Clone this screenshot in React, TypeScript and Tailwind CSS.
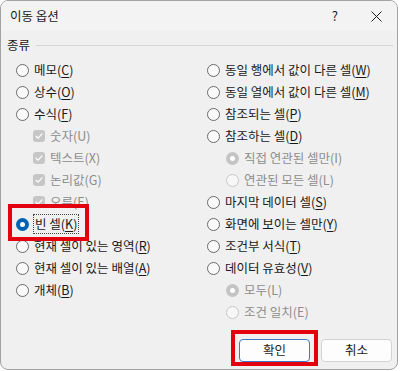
import React from "react"

type Item = {
  label: string
  key: string
  kind: "radio" | "check"
  indent?: boolean
  disabled?: boolean
  checked?: boolean
  focus?: boolean
}

const leftItems: Item[] = [
  { label: "메모", key: "C", kind: "radio" },
  { label: "상수", key: "O", kind: "radio" },
  { label: "수식", key: "F", kind: "radio" },
  { label: "숫자", key: "U", kind: "check", indent: true, disabled: true, checked: true },
  { label: "텍스트", key: "X", kind: "check", indent: true, disabled: true, checked: true },
  { label: "논리값", key: "G", kind: "check", indent: true, disabled: true, checked: true },
  { label: "오류", key: "E", kind: "check", indent: true, disabled: true, checked: true },
  { label: "빈 셀", key: "K", kind: "radio", checked: true, focus: true },
  { label: "현재 셀이 있는 영역", key: "R", kind: "radio" },
  { label: "현재 셀이 있는 배열", key: "A", kind: "radio" },
  { label: "개체", key: "B", kind: "radio" },
]

const rightItems: Item[] = [
  { label: "동일 행에서 값이 다른 셀", key: "W", kind: "radio" },
  { label: "동일 열에서 값이 다른 셀", key: "M", kind: "radio" },
  { label: "참조되는 셀", key: "P", kind: "radio" },
  { label: "참조하는 셀", key: "D", kind: "radio" },
  { label: "직접 연관된 셀만", key: "I", kind: "radio", indent: true, disabled: true, checked: true },
  { label: "연관된 모든 셀", key: "L", kind: "radio", indent: true, disabled: true },
  { label: "마지막 데이터 셀", key: "S", kind: "radio" },
  { label: "화면에 보이는 셀만", key: "Y", kind: "radio" },
  { label: "조건부 서식", key: "T", kind: "radio" },
  { label: "데이터 유효성", key: "V", kind: "radio" },
  { label: "모두", key: "L", kind: "radio", indent: true, disabled: true, checked: true },
  { label: "조건 일치", key: "E", kind: "radio", indent: true, disabled: true },
]

function Radio({ checked, disabled }: { checked?: boolean; disabled?: boolean }) {
  if (checked && !disabled) {
    return (
      <span className="w-[13px] h-[13px] rounded-full bg-[#0063b1] flex items-center justify-center shrink-0">
        <span className="w-[5px] h-[5px] rounded-full bg-white" />
      </span>
    )
  }
  if (checked && disabled) {
    return (
      <span className="w-[13px] h-[13px] rounded-full bg-[#c4c4c4] flex items-center justify-center shrink-0">
        <span className="w-[5px] h-[5px] rounded-full bg-white" />
      </span>
    )
  }
  return (
    <span
      className={
        disabled
          ? "w-[13px] h-[13px] rounded-full border border-[#c8c8c8] bg-[#f7f7f7] shrink-0"
          : "w-[13px] h-[13px] rounded-full border border-[#6b6b6b] bg-[#fafafa] shrink-0"
      }
    />
  )
}

function Check() {
  return (
    <span className="w-[12px] h-[12px] rounded-[3px] bg-[#c6c6c6] flex items-center justify-center shrink-0">
      <svg width="8" height="8" viewBox="0 0 8 8" fill="none">
        <path d="M1 4.2 L3.1 6.2 L7 1.8" stroke="white" strokeWidth="1.2" strokeLinecap="round" strokeLinejoin="round" />
      </svg>
    </span>
  )
}

function Row({ item, sub }: { item: Item; sub: number }) {
  const text = (
    <span className={item.focus ? "outline outline-1 outline-dotted outline-[#444] px-[1px]" : ""}>
      {item.label}(
      {item.disabled ? item.key : <span className="underline underline-offset-2">{item.key}</span>})
    </span>
  )
  return (
    <div
      className={
        "h-[22px] flex items-center gap-[5px] " +
        (item.disabled ? "text-[#8d8d8d] " : "text-[#1a1a1a] ")
      }
      style={{ paddingLeft: item.indent ? sub : 0 }}
    >
      {item.kind === "radio" ? <Radio checked={item.checked} disabled={item.disabled} /> : <Check />}
      {text}
    </div>
  )
}

export default function App() {
  return (
    <div
      className="w-[400px] h-[371px] bg-white relative"
      style={{ fontFamily: '"Noto Sans CJK KR", "Noto Sans", sans-serif' }}
    >
      <div className="w-[398px] h-[370px] rounded-[8px] border border-[#a3a3a3] overflow-hidden bg-[#f0f0f0] flex flex-col text-[12.5px]">
        <div className="h-[30px] bg-[#f3f3f3] flex items-center justify-between pl-[9px] pr-[15px]">
          <span className="text-[12.5px] text-[#1b1b1b]">이동 옵션</span>
          <div className="flex items-center gap-[33px]">
            <span className="text-[13px] text-[#1b1b1b]">?</span>
            <svg width="11" height="11" viewBox="0 0 11 11">
              <path d="M0.5 0.5 L10.5 10.5 M10.5 0.5 L0.5 10.5" stroke="#222" strokeWidth="1" />
            </svg>
          </div>
        </div>

        <div className="px-[6px] pt-[7px] flex items-center gap-[6px] h-[21px]">
          <span className="text-[#1a1a1a]">종류</span>
          <div className="flex-1 h-px bg-[#d6d6d6] mr-[-2px]" />
        </div>

        <div className="grid grid-cols-[191px_1fr] pl-[15px] mt-[7px]">
          <div className="flex flex-col">
            {leftItems.map((it, i) => (
              <Row key={i} item={it} sub={17} />
            ))}
          </div>
          <div className="flex flex-col">
            {rightItems.map((it, i) => (
              <Row key={i} item={it} sub={19} />
            ))}
          </div>
        </div>

        <div className="flex justify-end gap-[11px] pr-[5px] mt-[16px]">
          <button className="w-[71px] h-[23px] rounded-[4px] border border-[#3c78c8] bg-[#fdfdfd] text-[12.5px] text-[#1a1a1a] flex items-center justify-center">
            확인
          </button>
          <button className="w-[71px] h-[23px] rounded-[4px] border border-[#d2d2d2] bg-[#fdfdfd] text-[12.5px] text-[#1a1a1a] flex items-center justify-center">
            취소
          </button>
        </div>
      </div>

      <div className="absolute left-[8px] top-[204px] w-[81px] h-[37px] border-4 border-[#e3000f]" />
      <div className="absolute left-[231px] top-[330px] w-[87px] h-[36px] border-4 border-[#e3000f]" />
    </div>
  )
}
